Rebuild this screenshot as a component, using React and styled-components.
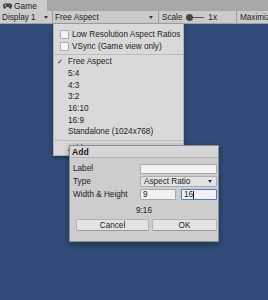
import React from 'react';
import styled, { createGlobalStyle } from 'styled-components';

const GlobalStyle = createGlobalStyle`
    html, body {
        margin: 0;
        padding: 0;
        background: #314c79;
    }
    body {
        font-family: "Liberation Sans", Arial, "DejaVu Sans", sans-serif;
        font-size: 8.2px;
        color: #1b1b1b;
    }
`;

const Page = styled.div`
    width: 268px;
    height: 300px;
    display: flex;
    flex-direction: column;
    overflow: hidden;
`;

const TabBar = styled.div`
    height: 11px;
    display: flex;
    background: #a7a7a7;
`;

const Tab = styled.div`
    width: 47px;
    display: flex;
    align-items: center;
    gap: 2px;
    padding-left: 3px;
    box-sizing: border-box;
    background: #cbcbcb;
    font-size: 8.4px;
`;

const Toolbar = styled.div`
    height: 13px;
    display: flex;
    align-items: center;
    background: #cbcbcb;
    border-bottom: 1px solid #a2a2a2;
    box-sizing: border-box;
`;

const ToolItem = styled.div`
    width: ${p => p.$w}px;
    flex: none;
    height: 100%;
    display: flex;
    align-items: center;
    justify-content: space-between;
    padding: 0 ${p => p.$pr || 0}px 0 ${p => p.$pl || 2}px;
    box-sizing: border-box;
    border-right: ${p => (p.$sep ? '1px solid #9f9f9f' : 'none')};
    gap: 4px;
    white-space: nowrap;
    overflow: hidden;
`;

const Arrow = styled.span`
    width: 0;
    height: 0;
    border-left: 2.5px solid transparent;
    border-right: 2.5px solid transparent;
    border-top: 3px solid #3a3a3a;
`;

const Slider = styled.div`
    display: flex;
    align-items: center;
    width: 24px;
`;

const Knob = styled.span`
    width: 7px;
    height: 7px;
    border-radius: 50%;
    background: #4a4a4a;
    flex: none;
`;

const Track = styled.span`
    flex: 1;
    height: 1px;
    background: #555;
`;

const Viewport = styled.div`
    flex: 1;
    position: relative;
    background: #314c79;
`;

const Menu = styled.div`
    position: absolute;
    left: 53px;
    top: 0;
    width: 131px;
    height: 132px;
    background: #d9d9d9;
    border: 1px solid #b4b4b4;
    border-top: none;
    box-sizing: border-box;
    box-shadow: 0 2px 4px rgba(0, 0, 0, 0.35);
    padding-top: 4px;
    display: flex;
    flex-direction: column;
`;

const CheckRow = styled.div`
    height: 12px;
    display: flex;
    align-items: center;
    gap: 3px;
    padding-left: 6px;
`;

const Box = styled.span`
    width: 7px;
    height: 7px;
    background: #f4f4f4;
    border: 0.5px solid #a9a9a9;
    border-radius: 1px;
`;

const Separator = styled.div`
    height: ${p => p.$h}px;
    display: flex;
    align-items: center;
    &::after {
        content: '';
        flex: 1;
        height: 1px;
        background: #bdbdbd;
    }
`;

const MenuItem = styled.div`
    height: 11.67px;
    display: flex;
    align-items: center;
    padding-left: 3px;
`;

const Check = styled.span`
    width: 11px;
    font-family: "DejaVu Sans", sans-serif;
    font-size: 7px;
`;

const Dialog = styled.div`
    position: absolute;
    left: 69px;
    top: 121px;
    width: 150px;
    height: 97px;
    background: #cdcdcd;
    border: 1px solid #8e8e8e;
    box-sizing: border-box;
    box-shadow: 0 2px 6px rgba(0, 0, 0, 0.4);
    display: flex;
    flex-direction: column;
`;

const TitleBar = styled.div`
    height: 11px;
    display: flex;
    align-items: center;
    padding-left: 2px;
    font-weight: bold;
    font-size: 8.6px;
    background: #d6d6d6;
    border-bottom: 1px solid #b0b0b0;
    flex: none;
`;

const Form = styled.div`
    display: grid;
    grid-template-columns: 67px 77px;
    grid-auto-rows: 11px;
    row-gap: 2px;
    padding: 5px 0 0 3px;
    align-items: center;
`;

const FieldLabel = styled.div`
    font-size: 8.2px;
`;

const Input = styled.div`
    height: ${p => p.$h || 11}px;
    background: #f1f1f1;
    border: 1px solid ${p => (p.$focus ? '#4a7fd0' : '#a9a9a9')};
    border-radius: 1px;
    box-sizing: border-box;
    display: flex;
    align-items: center;
    padding-left: 2px;
`;

const Caret = styled.span`
    width: 1px;
    height: 8px;
    background: #111;
`;

const Pair = styled.div`
    display: flex;
    gap: 5px;
    & > * {
        flex: 1;
    }
`;

const Select = styled.div`
    height: 11px;
    background: #e2e2e2;
    border: 1px solid #acacac;
    border-radius: 2px;
    box-sizing: border-box;
    display: flex;
    align-items: center;
    justify-content: space-between;
    padding: 0 4px 0 3px;
`;

const Ratio = styled.div`
    text-align: center;
    margin-top: 6px;
    height: 10px;
    line-height: 10px;
`;

const Buttons = styled.div`
    display: flex;
    gap: 3px;
    padding: 3px 0 0 6px;
`;

const Button = styled.div`
    width: ${p => p.$w}px;
    height: 12px;
    background: #e3e3e3;
    border: 1px solid #b2b2b2;
    border-bottom-color: #999;
    border-radius: 2px;
    box-sizing: border-box;
    display: flex;
    align-items: center;
    justify-content: center;
`;

function GameIcon() {
    return (
        <svg width="9" height="6" viewBox="0 0 9 6">
            <path d="M2 0.5 H7 A2 2 0 0 1 8.8 3.5 L8.3 5 A1 1 0 0 1 6.6 5.3 L5.6 4 H3.4 L2.4 5.3 A1 1 0 0 1 0.7 5 L0.2 3.5 A2 2 0 0 1 2 0.5 Z" fill="#3c3c3c" />
            <rect x="1.6" y="2.2" width="2" height="0.7" fill="#cbcbcb" />
            <rect x="2.25" y="1.55" width="0.7" height="2" fill="#cbcbcb" />
            <circle cx="6.4" cy="2.5" r="0.55" fill="#cbcbcb" />
        </svg>
    );
}

const aspects = ['5:4', '4:3', '3:2', '16:10', '16:9', 'Standalone (1024x768)'];

function App() {
    return (
        <Page>
            <GlobalStyle />
            <TabBar>
                <Tab>
                    <GameIcon />
                    <span>Game</span>
                </Tab>
            </TabBar>
            <Toolbar>
                <ToolItem $w={53} $sep $pr={4}>
                    <span>Display 1</span>
                    <Arrow />
                </ToolItem>
                <ToolItem $w={106} $sep $pr={5}>
                    <span>Free Aspect</span>
                    <Arrow />
                </ToolItem>
                <ToolItem $w={78} $sep $pl={3} $pr={19}>
                    <span>Scale</span>
                    <Slider>
                        <Knob />
                        <Track />
                    </Slider>
                    <span>1x</span>
                </ToolItem>
                <ToolItem $w={31} $pl={3}>
                    <span>Maximize On Play</span>
                </ToolItem>
            </Toolbar>
            <Viewport>
                <Menu>
                    <CheckRow>
                        <Box />
                        <span>Low Resolution Aspect Ratios</span>
                    </CheckRow>
                    <CheckRow>
                        <Box />
                        <span>VSync (Game view only)</span>
                    </CheckRow>
                    <Separator $h={4} />
                    <MenuItem>
                        <Check>✓</Check>
                        <span>Free Aspect</span>
                    </MenuItem>
                    {aspects.map(a => (
                        <MenuItem key={a}>
                            <Check />
                            <span>{a}</span>
                        </MenuItem>
                    ))}
                    <Separator $h={5} />
                    <MenuItem>
                        <Check />
                        <span>Add...</span>
                    </MenuItem>
                </Menu>
                <Dialog>
                    <TitleBar>Add</TitleBar>
                    <Form>
                        <FieldLabel>Label</FieldLabel>
                        <Input $h={10} />
                        <FieldLabel>Type</FieldLabel>
                        <Select>
                            <span>Aspect Ratio</span>
                            <Arrow />
                        </Select>
                        <FieldLabel>Width &amp; Height</FieldLabel>
                        <Pair>
                            <Input>9</Input>
                            <Input $focus>
                                16
                                <Caret />
                            </Input>
                        </Pair>
                    </Form>
                    <Ratio>9:16</Ratio>
                    <Buttons>
                        <Button $w={73}>Cancel</Button>
                        <Button $w={65}>OK</Button>
                    </Buttons>
                </Dialog>
            </Viewport>
        </Page>
    );
}

export default App;
